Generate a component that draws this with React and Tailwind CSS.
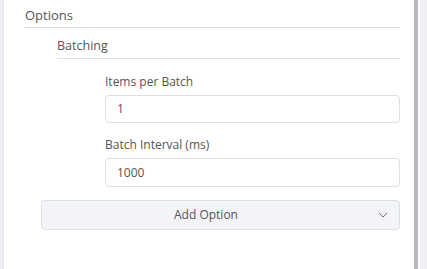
import React from "react";

export default function App() {
  return (
    <div
      className="w-[427px] h-[269px] flex bg-[#eef0f6] text-[#555558]"
      style={{ fontFamily: '"Open Sans", sans-serif' }}
    >
      <div className="w-[4px] bg-[#eceef5] border-r border-[#e4e5ec]" />
      <div className="w-[416px] bg-white flex">
        <div className="flex-1 pl-[21px] pr-[14px]">
          <div className="pt-[7px] pb-[4px] leading-[16px] text-[13px] border-b border-[#dcdbe4]">
            Options
          </div>
          <div className="ml-[32px]">
            <div className="pt-[10px] pb-[4px] leading-[16px] text-[12.5px] border-b border-[#dcdbe4]">
              Batching
            </div>
            <div className="ml-[48px] flex flex-col">
              <div className="mt-[15px] text-[12px] leading-[16px]">Items per Batch</div>
              <div className="mt-[5px] h-[28px] rounded-[4px] border border-[#dcdfe6] flex items-center pl-[11px] text-[12px]">
                1
              </div>
              <div className="mt-[14px] text-[12px] leading-[16px]">Batch Interval (ms)</div>
              <div className="mt-[5px] h-[29px] rounded-[4px] border border-[#dcdfe6] flex items-center pl-[11px] text-[12px]">
                1000
              </div>
            </div>
          </div>
          <div className="ml-[16px] mt-[13px] h-[30px] rounded-[4px] border border-[#dcdfe6] bg-[#f3f4f8] relative flex items-center justify-center pr-[29px] text-[12px]">
            <span>Add Option</span>
            <svg
              className="absolute right-[11px] top-[11px]"
              width="10"
              height="6"
              viewBox="0 0 10 6"
              fill="none"
            >
              <path d="M1 1 L5 5 L9 1" stroke="#777" strokeWidth="1" />
            </svg>
          </div>
        </div>
        <div className="w-[6px] flex">
          <div className="w-[4px] h-full bg-[#b8b8bc]" />
        </div>
      </div>
      <div className="flex-1 bg-[#eef0f6]" />
    </div>
  );
}
